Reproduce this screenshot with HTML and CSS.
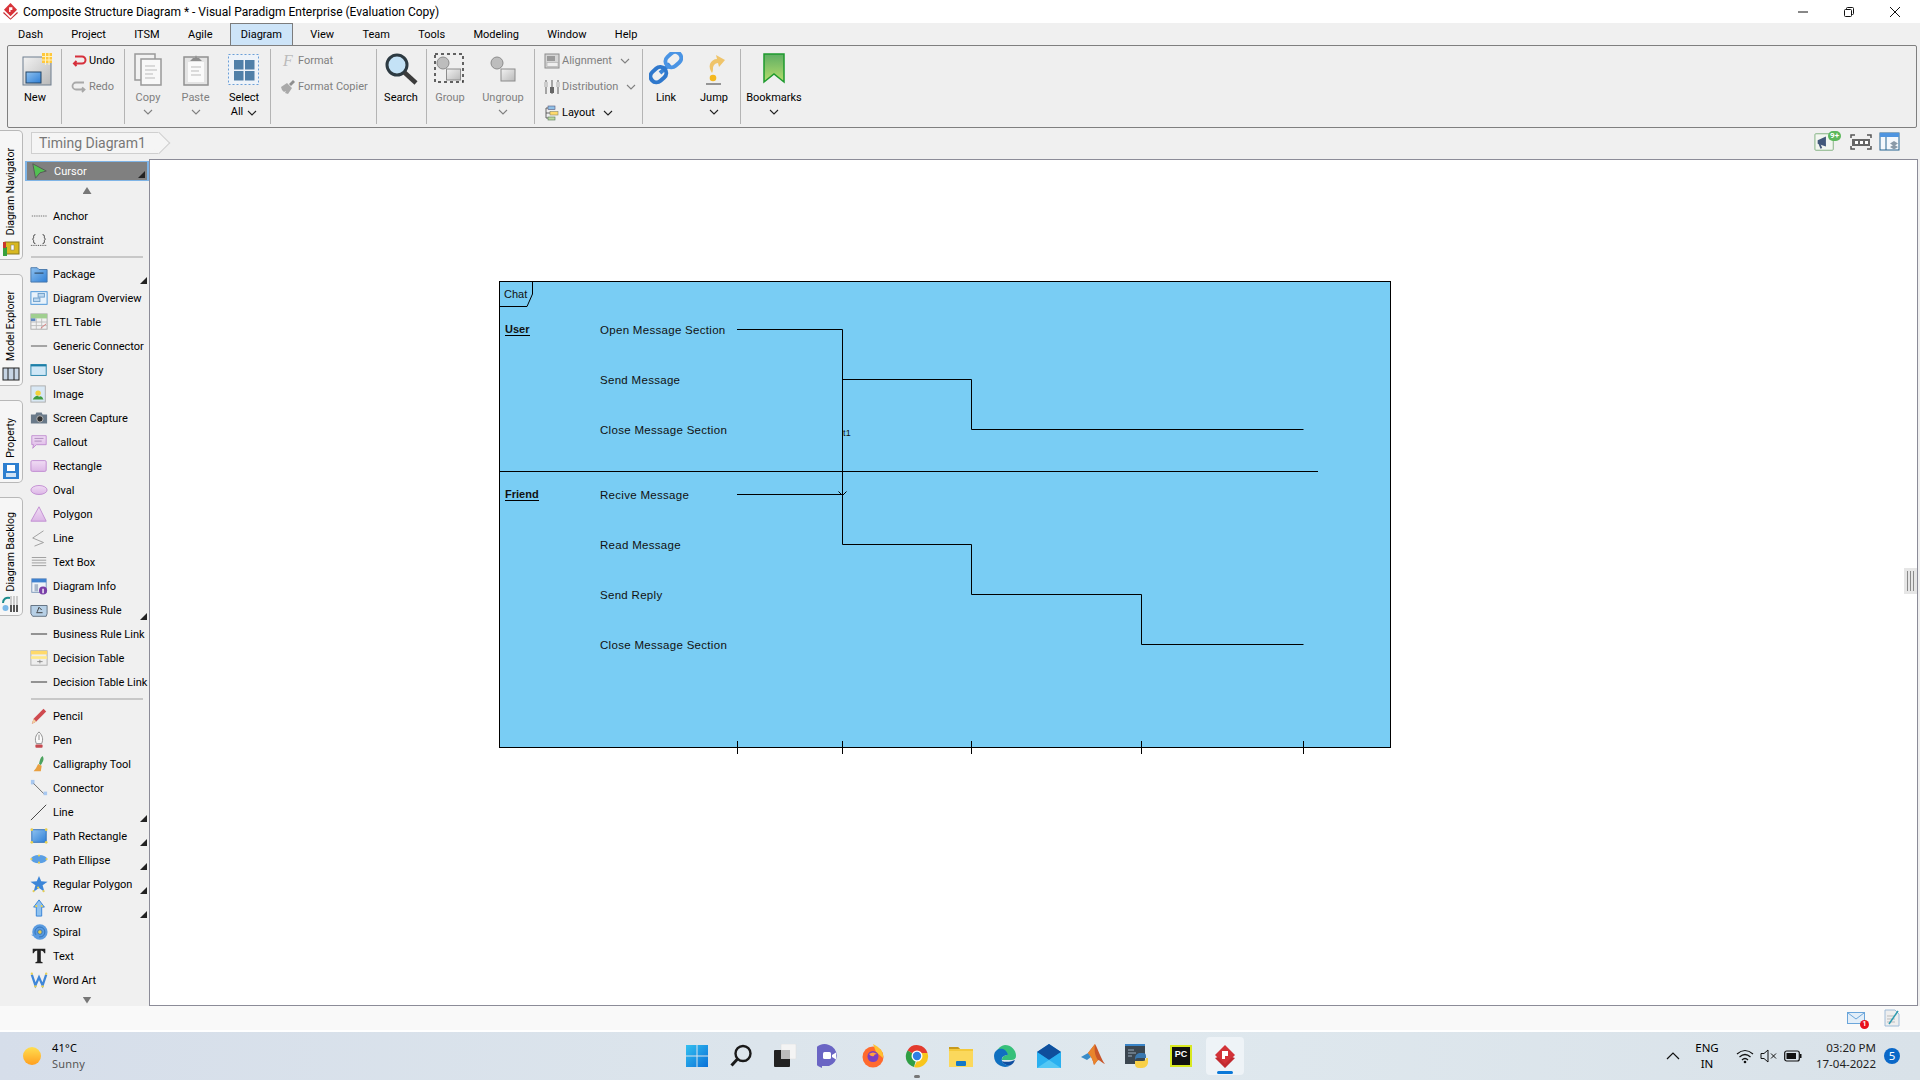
FILE: index.html
```html
<!DOCTYPE html>
<html lang="en">
<head>
<meta charset="utf-8">
<title>Composite Structure Diagram</title>
<link rel="stylesheet" href="styles.css">
</head>
<body>
<svg class="sprite" width="0" height="0">
  <defs>
    <linearGradient id="gBlue" x1="0" y1="0" x2="1" y2="1"><stop offset="0" stop-color="#8fc2f0"/><stop offset="1" stop-color="#2f7fd6"/></linearGradient>
    <linearGradient id="gGray" x1="0" y1="0" x2="1" y2="1"><stop offset="0" stop-color="#f2f2f2"/><stop offset="1" stop-color="#b9b9b9"/></linearGradient>
    <linearGradient id="gGreen" x1="0" y1="0" x2="0" y2="1"><stop offset="0" stop-color="#5fae64"/><stop offset="1" stop-color="#b6dd6c"/></linearGradient>
    <linearGradient id="gWin" x1="0" y1="0" x2="1" y2="1"><stop offset="0" stop-color="#33c0f0"/><stop offset="1" stop-color="#0a70d8"/></linearGradient>
    <linearGradient id="gViolet" x1="0" y1="0" x2="0" y2="1"><stop offset="0" stop-color="#f0dcf4"/><stop offset="1" stop-color="#dcb6e6"/></linearGradient>
  </defs>
  <symbol id="chev" viewBox="0 0 10 6"><path d="M1 1l4 4 4-4" fill="none" stroke="currentColor" stroke-width="1.1"/></symbol>
  <symbol id="vp" viewBox="0 0 16 18"><path d="M8 0l7 7-7 7-7-7z" fill="#d8343a"/><path d="M1 9.500l7 7 7-7 1 1.200-8 7-8-7z" fill="#c92e35"/><path d="M6.500 4.500h3.500v3h-2v2h-1.500z" fill="#fff"/></symbol>
  <symbol id="undo" viewBox="0 0 16 16"><path d="M4 3.500h7a3.500 3.500 0 0 1 0 7H3M5.500 8L3 10.500 5.500 13" fill="none" stroke="#d6303c" stroke-width="2"/></symbol>
  <symbol id="redo" viewBox="0 0 16 16"><path d="M13 3.500H5a3.500 3.500 0 0 0 0 7h8M11 8.500l2.500 2-2.500 2.500" fill="none" stroke="#a8a8a8" stroke-width="1.800"/></symbol>
  <symbol id="brush" viewBox="0 0 16 16"><path d="M1 8l6-4 5 5-4 6-3-1 1-2-2 1-2-2z" fill="#a9a9a9"/><path d="M9 5l4-4 2 2-4 4z" fill="#8e8e8e"/></symbol>
  <symbol id="align" viewBox="0 0 16 16"><rect x="1" y="1" width="14" height="14" fill="#d5d5d5" stroke="#8c8c8c"/><rect x="3" y="3" width="8" height="5" fill="#9a9a9a"/><rect x="3" y="9.500" width="11" height="4" fill="#eee" stroke="#aaa" stroke-width=".6"/></symbol>
  <symbol id="dist" viewBox="0 0 16 16"><path d="M2 1v14M8 1v14M14 1v14" stroke="#8c8c8c" stroke-width="1.500"/><rect x="0" y="3" width="4" height="5" fill="#ccc"/><rect x="6" y="8" width="4" height="6" fill="#666"/><rect x="12" y="3" width="4" height="5" fill="#ccc"/></symbol>
  <symbol id="layout" viewBox="0 0 16 16"><rect x="4" y="1" width="7" height="3.500" fill="#8fc0e8" stroke="#557"  stroke-width=".6"/><rect x="6" y="6.500" width="8" height="3.500" fill="#ffd96a" stroke="#886" stroke-width=".6"/><rect x="4" y="12" width="7" height="3" fill="#bcd8a0" stroke="#575" stroke-width=".6"/><path d="M2 3v10M2 3h2M2 8h4M2 13h2" stroke="#444" fill="none" stroke-width=".8"/></symbol>
  <symbol id="new" viewBox="0 0 34 34"><rect x="5" y="5" width="28" height="28" fill="url(#gGray)" stroke="#6f7f8f"/><rect x="8" y="20" width="15" height="11" fill="url(#gBlue)" stroke="#246"/><rect x="24" y="1" width="10" height="10" fill="#ffc83c"/><path d="M27.500 1v12M31 1v12M24 4.500h12M24 8h12" stroke="#fff3c0" stroke-width="1"/></symbol>
  <symbol id="copy" viewBox="0 0 34 34"><rect x="4" y="2" width="20" height="26" fill="#f2f2f2" stroke="#999" stroke-width="1.500"/><rect x="10" y="7" width="20" height="26" fill="#f8f8f8" stroke="#999" stroke-width="1.500"/><path d="M14 14h10M14 18h12M14 22h8M14 26h10" stroke="#bbb"/></symbol>
  <symbol id="paste" viewBox="0 0 34 34"><rect x="5" y="5" width="24" height="28" fill="#e4e4e4" stroke="#909090" stroke-width="1.500"/><rect x="9" y="10" width="16" height="20" fill="#fafafa"/><path d="M11 9l3-3h2l1-3 1 3h2l3 3z" fill="#8e8e8e"/><path d="M12 15h10M12 19h8M12 23h10" stroke="#bbb"/></symbol>
  <symbol id="selall" viewBox="0 0 34 34"><rect x="1.500" y="2.500" width="30" height="30" fill="#eef3f9" stroke="#6b9fd8" stroke-dasharray="2 2"/><rect x="7" y="8" width="9.500" height="9.500" fill="#4f7fa8"/><rect x="18" y="8" width="9.500" height="9.500" fill="#4f7fa8"/><rect x="7" y="19" width="9.500" height="9.500" fill="#4f7fa8"/><rect x="18" y="19" width="9.500" height="9.500" fill="#4f7fa8"/></symbol>
  <symbol id="search" viewBox="0 0 34 34"><circle cx="13" cy="13" r="10" fill="#c4e2f6" stroke="#2d3a42" stroke-width="3"/><path d="M20.500 20.500L32 31" stroke="#3c3c3c" stroke-width="4.500"/></symbol>
  <symbol id="group" viewBox="0 0 34 34"><rect x="2" y="2" width="28" height="28" fill="none" stroke="#333" stroke-width="1.500" stroke-dasharray="3 3"/><circle cx="10" cy="11" r="6" fill="#bdbdbd" stroke="#8c8c8c"/><rect x="13.500" y="17" width="14" height="11" fill="url(#gGray)" stroke="#8c8c8c"/></symbol>
  <symbol id="ungroup" viewBox="0 0 34 34"><circle cx="11" cy="11" r="6" fill="#bdbdbd" stroke="#8c8c8c"/><rect x="15" y="17" width="14" height="12" fill="url(#gGray)" stroke="#8c8c8c"/></symbol>
  <symbol id="link" viewBox="0 0 34 34"><path d="M11 21l10-9" stroke="#3a85d8" stroke-width="4"/><rect x="16" y="2" width="17" height="12" rx="6" transform="rotate(-42 24 8)" fill="none" stroke="#4a94e4" stroke-width="4"/><rect x="1" y="17" width="17" height="12" rx="6" transform="rotate(-42 9 23)" fill="none" stroke="#2f78cc" stroke-width="4"/></symbol>
  <symbol id="jump" viewBox="0 0 34 34"><path d="M15 21c-2-3-3-6-2-9 1-3 4-5 7-5l-1-4 9 5-6 7-1-4c-3 0-5 3-5 5 0 2 0 3-1 5z" fill="#efc46a"/><circle cx="16" cy="26" r="3.300" fill="#f4b820"/><path d="M9 32h15" stroke="#777" stroke-width="1.500"/></symbol>
  <symbol id="bookmark" viewBox="0 0 34 34"><path d="M7 2h20v28l-10-8-10 8z" fill="url(#gGreen)" stroke="#1e9a2e" stroke-width="1.500"/></symbol>
  <symbol id="cursor" viewBox="0 0 20 20"><path d="M2 2l15 8-7 2-5 6z" fill="#52c152" stroke="#555"/></symbol>
  <symbol id="anchor" viewBox="0 0 20 20"><path d="M2 10h17" stroke="#666" stroke-dasharray="1.500 1"/></symbol>
  <symbol id="constraint" viewBox="0 0 20 20"><path d="M6 4q-2 0-2 2v1.500L3 9l1 1.500V12q0 2 2 2M14 4q2 0 2 2v1.500L17 9l-1 1.500V12q0 2-2 2" fill="none" stroke="#333"/><path d="M1 16h18" stroke="#333" stroke-dasharray="1 1"/></symbol>
  <symbol id="package" viewBox="0 0 20 20"><path d="M1 3h7l2 2h9v14H1z" fill="url(#gBlue)" stroke="#4675a8"/><path d="M5 9h10" stroke="#234"/></symbol>
  <symbol id="overview" viewBox="0 0 20 20"><rect x="1" y="3" width="18" height="14" fill="#e8f2fb" stroke="#3f8fd8"/><rect x="9" y="5" width="7" height="4" fill="#bcd8f0" stroke="#6a9cc8"/><rect x="4" y="10" width="7" height="4" fill="#bcd8f0" stroke="#6a9cc8"/></symbol>
  <symbol id="etl" viewBox="0 0 20 20"><rect x="1" y="1" width="18" height="17" fill="#f2f2f2" stroke="#aaa"/><rect x="1" y="1" width="18" height="5" fill="#a0cf90"/><path d="M1 10h18M1 14h18M7 6v12M13 6v12" stroke="#bbb"/><rect x="1" y="6" width="5" height="3" fill="#5b85c0"/><path d="M12 17l6-5" stroke="#d87070"/></symbol>
  <symbol id="gline" viewBox="0 0 20 20"><path d="M1 10h18" stroke="#808080" stroke-width="1.500"/></symbol>
  <symbol id="dline" viewBox="0 0 20 20"><path d="M1 10h18" stroke="#444" stroke-width="1.200"/></symbol>
  <symbol id="story" viewBox="0 0 20 20"><rect x="1" y="4" width="17" height="12" fill="#cfe7f6" stroke="#1d7fa8"/><rect x="1" y="4" width="17" height="2" fill="#1d7fa8"/></symbol>
  <symbol id="image" viewBox="0 0 20 20"><rect x="1" y="1" width="16" height="18" fill="#d9e8f4" stroke="#aaa"/><circle cx="9" cy="9" r="3" fill="#f4d23c"/><path d="M3 16q4-6 7-3 3-2 5 3z" fill="#3f9c3f"/></symbol>
  <symbol id="camera" viewBox="0 0 20 20"><path d="M1 6h5l1-2h6l1 2h5v10H1z" fill="#6a7a8a"/><circle cx="11" cy="11" r="3.500" fill="#333" stroke="#bbb"/></symbol>
  <symbol id="callout" viewBox="0 0 20 20"><path d="M2 3h16v10H7l-4 4 1-4H2z" fill="url(#gViolet)" stroke="#c08ad0"/><path d="M5 6h10M5 9h8" stroke="#a888b8"/></symbol>
  <symbol id="rect" viewBox="0 0 20 20"><rect x="1" y="4" width="17" height="12" rx="1.500" fill="url(#gViolet)" stroke="#c08ad0"/></symbol>
  <symbol id="oval" viewBox="0 0 20 20"><ellipse cx="10" cy="10" rx="9" ry="5" fill="url(#gViolet)" stroke="#c08ad0"/></symbol>
  <symbol id="poly" viewBox="0 0 20 20"><path d="M10 2l8 16H1z" fill="url(#gViolet)" stroke="#c08ad0"/></symbol>
  <symbol id="zline" viewBox="0 0 20 20"><path d="M15 2L3 10l12 5-10 4" fill="none" stroke="#999"/></symbol>
  <symbol id="textbox" viewBox="0 0 20 20"><path d="M2 5h16M2 8h16M2 11h16M2 14h16" stroke="#999"/></symbol>
  <symbol id="dinfo" viewBox="0 0 20 20"><rect x="2" y="2" width="16" height="15" fill="#eef3f8" stroke="#7a95b8"/><rect x="2" y="2" width="16" height="4" fill="#3f82d0"/><rect x="5" y="8" width="4" height="8" fill="#a8b8cc"/><circle cx="14.500" cy="15" r="4.500" fill="#7a3fa8"/><path d="M14.500 13v5" stroke="#fff" stroke-width="1.500"/></symbol>
  <symbol id="brule" viewBox="0 0 20 20"><path d="M1 5h18v9l-1 3H3l-2-3z" fill="#b7d0e6" stroke="#5a6a7a"/><path d="M7 13h7M8 12l2-5 3 3" stroke="#333" fill="none"/></symbol>
  <symbol id="dtable" viewBox="0 0 20 20"><rect x="1" y="2" width="18" height="16" fill="#eee" stroke="#aaa"/><rect x="1" y="2" width="18" height="4" fill="#ffd96a"/><rect x="1" y="8" width="18" height="3" fill="#ffe88a"/><path d="M8 14h6M11 12v4" stroke="#888"/></symbol>
  <symbol id="pencil" viewBox="0 0 20 20"><path d="M2 19l2-6L15 2l3 3L7 16z" fill="#cf4a4f"/><path d="M2 19l2-6 3 3z" fill="#f0d0a0"/></symbol>
  <symbol id="pen" viewBox="0 0 20 20"><path d="M10 1c4 4 5 8 3 13H7C5 9 6 5 10 1z" fill="#fafafa" stroke="#888"/><path d="M10 4v6" stroke="#888"/><rect x="6" y="15" width="8" height="3.500" rx="1" fill="#c64a50"/></symbol>
  <symbol id="calli" viewBox="0 0 20 20"><path d="M14 1c2 3 1 6-2 10l-2-1c1-4 1-7 4-9z" fill="#4da35f"/><path d="M9 10l4 2-1 6H4q3-3 5-8z" fill="#e9a040"/></symbol>
  <symbol id="connector" viewBox="0 0 20 20"><rect x="1" y="1" width="4" height="5" fill="#a8c8f0"/><rect x="15" y="14" width="4" height="4" fill="#a8c8f0"/><path d="M4 5l11 11" stroke="#666"/></symbol>
  <symbol id="line2" viewBox="0 0 20 20"><path d="M1 19L18 2" stroke="#333"/></symbol>
  <symbol id="prect" viewBox="0 0 20 20"><rect x="2" y="3" width="16" height="14" fill="url(#gBlue)" stroke="#2f6fb8"/><g fill="#e8cf50"><circle cx="2" cy="3" r="1.500"/><circle cx="18" cy="3" r="1.500"/><circle cx="2" cy="17" r="1.500"/><circle cx="18" cy="17" r="1.500"/></g></symbol>
  <symbol id="pell" viewBox="0 0 20 20"><ellipse cx="10" cy="9" rx="9" ry="4.500" fill="#5a9fe4"/><g fill="#e8cf50"><circle cx="10" cy="5" r="1.200"/><circle cx="10" cy="13" r="1.200"/><circle cx="1.500" cy="9" r="1.200"/><circle cx="18.500" cy="9" r="1.200"/></g></symbol>
  <symbol id="rpoly" viewBox="0 0 20 20"><path d="M10 1l2.500 6 7 .5-5.500 4 2 7-6-4-6 4 2-7L.5 7.500l7-.5z" fill="#3c86d8"/><g fill="#e8cf50"><circle cx="4" cy="18" r="1.200"/><circle cx="9" cy="14" r="1.200"/><circle cx="15" cy="18" r="1.200"/></g></symbol>
  <symbol id="arrow" viewBox="0 0 20 20"><path d="M10 1l6 8h-3v10H7V9H4z" fill="#8fc2f0" stroke="#2f7fd6"/><circle cx="7" cy="8" r="1.200" fill="#e8cf50"/><circle cx="13" cy="8" r="1.200" fill="#e8cf50"/></symbol>
  <symbol id="spiral" viewBox="0 0 20 20"><circle cx="11" cy="10" r="8.500" fill="#5a9be0"/><circle cx="11" cy="10" r="5.500" fill="none" stroke="#2f6fb8"/><circle cx="11" cy="10" r="2.500" fill="#e8cf50" stroke="#2f6fb8"/><path d="M1 13h9v5z" fill="#5a9be0"/></symbol>
  <symbol id="bigt" viewBox="0 0 20 20"><path d="M3 2h14v5h-1q-1-3-4-3v12l2 1v1H6v-1l2-1V4q-3 0-4 3H3z" fill="#222"/></symbol>
  <symbol id="wordart" viewBox="0 0 20 20"><path d="M2 4l4 12 4-9 4 9 4-12" fill="none" stroke="#3f86d8" stroke-width="2.500"/><g fill="#e8cf50"><circle cx="2" cy="3" r="1.300"/><circle cx="18" cy="3" r="1.300"/><circle cx="6" cy="17" r="1.300"/><circle cx="14" cy="17" r="1.300"/></g></symbol>
  <symbol id="navtab" viewBox="0 0 18 18"><rect x="3" y="3" width="14" height="12" fill="#d8b820" stroke="#8a7a20"/><rect x="9" y="6" width="3" height="5" fill="#fff" stroke="#777" stroke-width=".5"/><rect x="1" y="8" width="4" height="9" fill="#38a03c"/><rect x="1" y="3" width="3" height="6" fill="#c8362c"/></symbol>
  <symbol id="modeltab" viewBox="0 0 18 18"><rect x="1" y="3" width="16" height="12" fill="#c6d4e4" stroke="#222"/><path d="M6 3v12M12 3v12" stroke="#222"/></symbol>
  <symbol id="proptab" viewBox="0 0 18 18"><rect x="1" y="1" width="16" height="16" fill="#2d7fd0"/><rect x="5" y="3" width="8" height="6" fill="#fff"/><path d="M4 11h10v4H4z" fill="#cfe2f5"/></symbol>
  <symbol id="backtab" viewBox="0 0 18 18"><path d="M1 8c0-4 3-6 7-5" fill="none" stroke="#1c8c8c" stroke-width="2"/><circle cx="3.500" cy="13" r="3" fill="#7ab8e8"/><path d="M9 1v16M12 1v16M15 1v16" stroke="#ccc" stroke-width="2"/><path d="M9 10v7M12 10v7M15 10v7" stroke="#555" stroke-width="2"/></symbol>
  <symbol id="shout" viewBox="0 0 24 20"><rect x="1" y="1" width="20" height="18" rx="1" fill="#f2f6f0" stroke="#7cae7c"/><path d="M4 8l9-4v11l-9-3z" fill="#42587a"/><path d="M6 12l2 5" stroke="#42587a" stroke-width="2"/></symbol>
  <symbol id="film" viewBox="0 0 22 18"><path d="M1 5V2h4M17 2h4v3M1 13v3h4M17 16h4v-3" fill="none" stroke="#555" stroke-width="1.500"/><rect x="2" y="6" width="18" height="7" fill="#666"/><path d="M5 8h3v3H5zM10 8h3v3h-3zM15 8h3v3h-3z" fill="#fff"/></symbol>
  <symbol id="panel" viewBox="0 0 22 20"><rect x="1" y="1" width="19" height="17" fill="#f4f8fc" stroke="#24628f"/><rect x="1" y="1" width="19" height="4" fill="#4f95e0"/><path d="M7 5v13" stroke="#24628f"/><path d="M15 9l4 2.500-4 2.500-4-2.500zM15 12.500l4 2.500-4 2.500-4-2.500z" fill="#8a9aa8"/></symbol>
  <symbol id="mail" viewBox="0 0 18 12"><rect x=".500" y=".500" width="17" height="11" fill="#e3eef8" stroke="#6aa5da"/><path d="M1 1l8 6 8-6" fill="none" stroke="#6aa5da"/></symbol>
  <symbol id="note" viewBox="0 0 16 18"><path d="M1 1h10l4 4v12H1z" fill="#eee" stroke="#a0bcd8"/><path d="M3 7h7M3 10h8M3 13h8" stroke="#bbb"/><path d="M5 15L14 2" stroke="#2c9ab0" stroke-width="1.500"/></symbol>
  <symbol id="t-win" viewBox="0 0 24 24"><path d="M1 1h10.500v10.500H1zM12.500 1H23v10.500H12.500zM1 12.500h10.500V23H1zM12.500 12.500H23V23H12.500z" fill="url(#gWin)"/></symbol>
  <symbol id="t-search" viewBox="0 0 24 24"><circle cx="14" cy="9.500" r="7.500" fill="none" stroke="#1a1a1a" stroke-width="2.400"/><path d="M8.500 15L2.500 21.500" stroke="#1a1a1a" stroke-width="3"/></symbol>
  <symbol id="t-task" viewBox="0 0 24 24"><rect x="8" y="0" width="15" height="15" rx="1" fill="#f4f4f4" stroke="#ddd" stroke-width=".5"/><rect x="1" y="6" width="16" height="17" rx="1" fill="#222"/><rect x="8" y="6" width="9" height="9" fill="#bbb"/></symbol>
  <symbol id="t-chat" viewBox="0 0 24 24"><path d="M12 1a11 11 0 0 1 0 21H5v2l-2-1a11 11 0 0 1 9-22z" fill="#6a65c4"/><rect x="6" y="8" width="8" height="7" rx="1.500" fill="#fff"/><path d="M15 11l4-2.500v7L15 13z" fill="#fff"/></symbol>
  <symbol id="t-ff" viewBox="0 0 24 24"><circle cx="12" cy="13" r="10.500" fill="#ff6a2e"/><path d="M12 0c6 3 11 7 10 14L15 8z" fill="#ffc030"/><circle cx="12" cy="12.500" r="5.500" fill="#7a3fc0"/><path d="M8 10q4-3 8 0-3 0-3 2-3 1-5-2z" fill="#ffa040"/></symbol>
  <symbol id="t-chrome" viewBox="0 0 24 24"><path d="M12 12L2.500 6.500A11 11 0 0 1 22.500 9H12z" fill="#e33b2e"/><path d="M12 12l-9.500-5.500A11 11 0 0 0 9 23z" fill="#2f9e44"/><path d="M12 9h10.500A11 11 0 0 1 9 23l5-10z" fill="#f8c51c"/><circle cx="12" cy="12" r="5.500" fill="#fff"/><circle cx="12" cy="12" r="4.200" fill="#2f7fe6"/></symbol>
  <symbol id="t-folder" viewBox="0 0 24 24"><path d="M0 3h9l2 2h13v18H0z" fill="#f4c93a"/><path d="M0 3h9l2 2H0z" fill="#c89a1c"/><rect x="0" y="7" width="24" height="16" fill="#fbd85c"/><rect x="7" y="17" width="10" height="5" rx="1" fill="#1478c8"/></symbol>
  <symbol id="t-edge" viewBox="0 0 24 24"><path d="M12 1a11 11 0 0 1 11 11q0 4-5 4H9c0-4 3-5 6-5-1-3-9-4-12 3A11 11 0 0 1 12 1z" fill="#36c07a"/><path d="M1 12q0-4 3-6c3-2 9-2 11 5-4 0-7 2-6 6 1 3 5 5 9 4a11 11 0 0 1-17-9z" fill="#1070c0"/><path d="M9 17c1 3 5 5 9 4 2-1 3-3 4-5-2 1-9 3-13 1z" fill="#0f4fa0"/></symbol>
  <symbol id="t-mail" viewBox="0 0 24 24"><path d="M0 8l12-8 12 8v16H0z" fill="#1a86d8"/><path d="M0 8l12 8 12-8-12-8z" fill="#0f4f9c"/><path d="M0 8l12 8 12-8v16H0z" fill="#2ab0f0"/><path d="M0 24l12-8 12 8z" fill="#54c8f5"/></symbol>
  <symbol id="t-matlab" viewBox="0 0 24 24"><path d="M0 13l7-4 3 4-4 3z" fill="#3a8cc8"/><path d="M7 9l7-9c3 5 6 15 10 20-3-1-5-4-7-4-2 2-3 4-4 5-1-4-2-8-6-12z" fill="#c8562a"/><path d="M14 0c-1 7 0 12 3 16-2 2-3 4-4 5-1-4-2-8-6-12z" fill="#e8842c"/></symbol>
  <symbol id="t-py" viewBox="0 0 24 24"><rect x="0" y="0" width="20" height="20" fill="#3b4650"/><rect x="0" y="0" width="20" height="2" fill="#3a85c8"/><path d="M3 6h6M3 9h8M3 12h4" stroke="#9ab" /><path d="M14 9h4a3 3 0 0 1 3 3v2h-8a3 3 0 0 0-3 3v-2a6 6 0 0 1 4-6z" fill="#3a78b0"/><path d="M10 17h8a3 3 0 0 0 3-3h2v3a6 6 0 0 1-6 7h-3a4 4 0 0 1-4-4z" fill="#f8d048"/></symbol>
  <symbol id="t-vp" viewBox="0 0 24 24"><path d="M12 1l10 10-10 10L2 11z" fill="#d23238"/><path d="M2 14l10 10 10-10-3-1-7 7-7-7z" fill="#c22a30"/><path d="M9 7h6v5h-3v3H9z" fill="#fff"/></symbol>
  <symbol id="wifi" viewBox="0 0 18 16"><path d="M1 6q8-7 16 0M3.500 9q5.500-5 11 0M6 12q3-3 6 0" fill="none" stroke="#111" stroke-width="1.200"/><circle cx="9" cy="14" r="1.300" fill="#111"/></symbol>
  <symbol id="sound" viewBox="0 0 18 16"><path d="M1 5.500h3l4-3.500v12l-4-3.500H1z" fill="none" stroke="#111"/><path d="M11 5.500l5 5M16 5.500l-5 5" stroke="#111"/></symbol>
  <symbol id="battery" viewBox="0 0 18 12"><rect x=".700" y="1" width="14.600" height="10" rx="2" fill="none" stroke="#111" stroke-width="1.200"/><rect x="2.500" y="3" width="9.500" height="6" fill="#111"/><rect x="16" y="4" width="1.500" height="4" fill="#111"/></symbol>
  <symbol id="caret" viewBox="0 0 14 8"><path d="M1 7l6-6 6 6" fill="none" stroke="#111" stroke-width="1.200"/></symbol>
  <symbol id="min" viewBox="0 0 10 10"><path d="M0 5h10" stroke="#111"/></symbol>
  <symbol id="max" viewBox="0 0 10 10"><rect x=".500" y="2.500" width="7" height="7" rx="1" fill="#fff" stroke="#111"/><path d="M2.500 2.500v-1q0-1 1-1h5q1 0 1 1v5q0 1-1 1h-1" fill="none" stroke="#111"/></symbol>
  <symbol id="close" viewBox="0 0 10 10"><path d="M0 0l10 10M10 0L0 10" stroke="#111"/></symbol>
</svg>

<header class="titlebar">
  <svg class="title-logo"><use href="#vp"/></svg>
  <span class="title-text">Composite Structure Diagram * - Visual Paradigm Enterprise (Evaluation Copy)</span>
  <div class="win-controls">
    <svg class="win-btn"><use href="#min"/></svg>
    <svg class="win-btn"><use href="#max"/></svg>
    <svg class="win-btn"><use href="#close"/></svg>
  </div>
</header>

<nav class="menubar">
  <span class="menu-item">Dash</span>
  <span class="menu-item">Project</span>
  <span class="menu-item">ITSM</span>
  <span class="menu-item">Agile</span>
  <span class="menu-item menu-active">Diagram</span>
  <span class="menu-item">View</span>
  <span class="menu-item">Team</span>
  <span class="menu-item">Tools</span>
  <span class="menu-item">Modeling</span>
  <span class="menu-item">Window</span>
  <span class="menu-item">Help</span>
</nav>

<section class="ribbon">
  <div class="group g-new">
    <div class="big w54"><svg class="big-ico"><use href="#new"/></svg><span class="big-label">New</span></div>
  </div>
  <div class="group g-undo stack">
    <div class="small"><svg class="small-ico"><use href="#undo"/></svg><span>Undo</span></div>
    <div class="small off"><svg class="small-ico"><use href="#redo"/></svg><span>Redo</span></div>
  </div>
  <div class="group g-edit">
    <div class="big w46 off"><svg class="big-ico"><use href="#copy"/></svg><span class="big-label">Copy</span><svg class="chev"><use href="#chev"/></svg></div>
    <div class="big w49 off"><svg class="big-ico"><use href="#paste"/></svg><span class="big-label">Paste</span><svg class="chev"><use href="#chev"/></svg></div>
    <div class="big w48"><svg class="big-ico"><use href="#selall"/></svg><span class="big-label">Select</span><span class="all-line">All <svg class="chev inline"><use href="#chev"/></svg></span></div>
  </div>
  <div class="group g-format stack">
    <div class="small off"><span class="small-ico f-glyph">F</span><span>Format</span></div>
    <div class="small off"><svg class="small-ico"><use href="#brush"/></svg><span>Format Copier</span></div>
  </div>
  <div class="group g-search">
    <div class="big w48"><svg class="big-ico"><use href="#search"/></svg><span class="big-label">Search</span></div>
  </div>
  <div class="group g-group">
    <div class="big w46 off"><svg class="big-ico"><use href="#group"/></svg><span class="big-label">Group</span></div>
    <div class="big w60 off"><svg class="big-ico"><use href="#ungroup"/></svg><span class="big-label">Ungroup</span><svg class="chev"><use href="#chev"/></svg></div>
  </div>
  <div class="group g-arrange stack">
    <div class="small off"><svg class="small-ico"><use href="#align"/></svg><span>Alignment</span><svg class="chev side"><use href="#chev"/></svg></div>
    <div class="small off"><svg class="small-ico"><use href="#dist"/></svg><span>Distribution</span><svg class="chev side"><use href="#chev"/></svg></div>
    <div class="small"><svg class="small-ico"><use href="#layout"/></svg><span>Layout</span><svg class="chev side"><use href="#chev"/></svg></div>
  </div>
  <div class="group g-link">
    <div class="big w46"><svg class="big-ico"><use href="#link"/></svg><span class="big-label">Link</span></div>
    <div class="big w50"><svg class="big-ico"><use href="#jump"/></svg><span class="big-label">Jump</span><svg class="chev"><use href="#chev"/></svg></div>
  </div>
  <div class="group g-book">
    <div class="big w66"><svg class="big-ico"><use href="#bookmark"/></svg><span class="big-label">Bookmarks</span><svg class="chev"><use href="#chev"/></svg></div>
  </div>
</section>

<main class="main">
  <aside class="side-tabs">
    <div class="side-tab t1"><span class="side-label">Diagram Navigator</span><svg class="side-ico"><use href="#navtab"/></svg></div>
    <div class="side-tab t2"><span class="side-label">Model Explorer</span><svg class="side-ico"><use href="#modeltab"/></svg></div>
    <div class="side-tab t3"><span class="side-label">Property</span><svg class="side-ico"><use href="#proptab"/></svg></div>
    <div class="side-tab t4"><span class="side-label">Diagram Backlog</span><svg class="side-ico"><use href="#backtab"/></svg></div>
  </aside>
  <div class="content">
    <div class="crumb-row">
      <div class="crumb"><span class="crumb-text">Timing Diagram1</span></div>
      <div class="crumb-tools">
        <span class="shout-wrap"><svg class="tool-ico"><use href="#shout"/></svg><span class="shout-badge">9+</span></span>
        <svg class="tool-ico"><use href="#film"/></svg>
        <svg class="tool-ico"><use href="#panel"/></svg>
      </div>
    </div>
    <div class="work">
      <div class="palette">
        <div class="row cursor-row more"><svg class="pal-ico"><use href="#cursor"/></svg><span>Cursor</span></div>
        <div class="scroll-arrow"><span class="tri-up"></span></div>
        <div class="row anchor-row"><svg class="pal-ico"><use href="#anchor"/></svg><span>Anchor</span></div>
        <div class="row"><svg class="pal-ico"><use href="#constraint"/></svg><span>Constraint</span></div>
        <div class="sep"></div>
        <div class="row more"><svg class="pal-ico"><use href="#package"/></svg><span>Package</span></div>
        <div class="row"><svg class="pal-ico"><use href="#overview"/></svg><span>Diagram Overview</span></div>
        <div class="row"><svg class="pal-ico"><use href="#etl"/></svg><span>ETL Table</span></div>
        <div class="row"><svg class="pal-ico"><use href="#gline"/></svg><span>Generic Connector</span></div>
        <div class="row"><svg class="pal-ico"><use href="#story"/></svg><span>User Story</span></div>
        <div class="row"><svg class="pal-ico"><use href="#image"/></svg><span>Image</span></div>
        <div class="row"><svg class="pal-ico"><use href="#camera"/></svg><span>Screen Capture</span></div>
        <div class="row"><svg class="pal-ico"><use href="#callout"/></svg><span>Callout</span></div>
        <div class="row"><svg class="pal-ico"><use href="#rect"/></svg><span>Rectangle</span></div>
        <div class="row"><svg class="pal-ico"><use href="#oval"/></svg><span>Oval</span></div>
        <div class="row"><svg class="pal-ico"><use href="#poly"/></svg><span>Polygon</span></div>
        <div class="row"><svg class="pal-ico"><use href="#zline"/></svg><span>Line</span></div>
        <div class="row"><svg class="pal-ico"><use href="#textbox"/></svg><span>Text Box</span></div>
        <div class="row"><svg class="pal-ico"><use href="#dinfo"/></svg><span>Diagram Info</span></div>
        <div class="row more"><svg class="pal-ico"><use href="#brule"/></svg><span>Business Rule</span></div>
        <div class="row"><svg class="pal-ico"><use href="#dline"/></svg><span>Business Rule Link</span></div>
        <div class="row"><svg class="pal-ico"><use href="#dtable"/></svg><span>Decision Table</span></div>
        <div class="row"><svg class="pal-ico"><use href="#dline"/></svg><span>Decision Table Link</span></div>
        <div class="sep"></div>
        <div class="row"><svg class="pal-ico"><use href="#pencil"/></svg><span>Pencil</span></div>
        <div class="row"><svg class="pal-ico"><use href="#pen"/></svg><span>Pen</span></div>
        <div class="row"><svg class="pal-ico"><use href="#calli"/></svg><span>Calligraphy Tool</span></div>
        <div class="row"><svg class="pal-ico"><use href="#connector"/></svg><span>Connector</span></div>
        <div class="row more"><svg class="pal-ico"><use href="#line2"/></svg><span>Line</span></div>
        <div class="row more"><svg class="pal-ico"><use href="#prect"/></svg><span>Path Rectangle</span></div>
        <div class="row more"><svg class="pal-ico"><use href="#pell"/></svg><span>Path Ellipse</span></div>
        <div class="row more"><svg class="pal-ico"><use href="#rpoly"/></svg><span>Regular Polygon</span></div>
        <div class="row more"><svg class="pal-ico"><use href="#arrow"/></svg><span>Arrow</span></div>
        <div class="row"><svg class="pal-ico"><use href="#spiral"/></svg><span>Spiral</span></div>
        <div class="row"><svg class="pal-ico"><use href="#bigt"/></svg><span>Text</span></div>
        <div class="row"><svg class="pal-ico"><use href="#wordart"/></svg><span>Word Art</span></div>
        <div class="scroll-arrow down"><span class="tri-down"></span></div>
      </div>
      <div class="canvas">
        <svg class="diagram" viewBox="150 160 1768 845" width="1768" height="845" preserveAspectRatio="xMinYMin">
          <rect class="frame" x="499.500" y="281.500" width="891" height="466"/>
          <path class="ln" d="M499.500 306.500H527L532.500 294V281.500"/>
          <path class="ln" d="M499.500 471.500H1318"/>
          <path class="ln" d="M737 329.500H842.500V544.500H971.500V594.500H1141.500V644.500H1303.500"/>
          <path class="ln" d="M842.500 379.500H971.500V429.500H1303.500"/>
          <path class="ln" d="M737 494.500H842.500"/>
          <path class="ln" d="M838.500 491.500L842.500 495.500 846.500 491.500"/>
          <path class="ln" d="M737.500 741V754M842.500 741V754M971.500 741V754M1141.500 741V754M1303.500 741V754"/>
          <text class="dg chat" x="504" y="298">Chat</text>
          <text class="dg strong" x="505" y="333">User</text>
          <path class="ln" d="M505 335.500H530"/>
          <text class="dg strong" x="505" y="498">Friend</text>
          <path class="ln" d="M505 500.500H539"/>
          <text class="dg" x="600" y="334">Open Message Section</text>
          <text class="dg" x="600" y="384">Send Message</text>
          <text class="dg" x="600" y="434">Close Message Section</text>
          <text class="dg" x="600" y="499">Recive Message</text>
          <text class="dg" x="600" y="549">Read Message</text>
          <text class="dg" x="600" y="599">Send Reply</text>
          <text class="dg" x="600" y="649">Close Message Section</text>
          <text class="dg tiny" x="843" y="436">t1</text>
        </svg>
        <div class="handle"></div>
      </div>
    </div>
  </div>
</main>

<div class="statusbar">
  <span class="mail-wrap"><svg class="mail-ico"><use href="#mail"/></svg><span class="mail-dot">1</span></span>
  <svg class="note-ico"><use href="#note"/></svg>
</div>

<footer class="taskbar">
  <div class="weather">
    <span class="sun"></span>
    <div class="weather-text"><span>41°C</span><span class="dim">Sunny</span></div>
  </div>
  <div class="task-icons">
    <span class="task"><svg class="task-ico"><use href="#t-win"/></svg></span>
    <span class="task"><svg class="task-ico"><use href="#t-search"/></svg></span>
    <span class="task"><svg class="task-ico"><use href="#t-task"/></svg></span>
    <span class="task"><svg class="task-ico"><use href="#t-chat"/></svg></span>
    <span class="task"><svg class="task-ico"><use href="#t-ff"/></svg></span>
    <span class="task running"><svg class="task-ico"><use href="#t-chrome"/></svg></span>
    <span class="task"><svg class="task-ico"><use href="#t-folder"/></svg></span>
    <span class="task"><svg class="task-ico"><use href="#t-edge"/></svg></span>
    <span class="task"><svg class="task-ico"><use href="#t-mail"/></svg></span>
    <span class="task"><svg class="task-ico"><use href="#t-matlab"/></svg></span>
    <span class="task"><svg class="task-ico"><use href="#t-py"/></svg></span>
    <span class="task"><span class="pc-icon">PC</span></span>
    <span class="task active"><svg class="task-ico"><use href="#t-vp"/></svg></span>
  </div>
  <div class="tray">
    <svg class="tray-caret"><use href="#caret"/></svg>
    <div class="lang"><span>ENG</span><span>IN</span></div>
    <svg class="tray-ico"><use href="#wifi"/></svg>
    <svg class="tray-ico"><use href="#sound"/></svg>
    <svg class="tray-ico"><use href="#battery"/></svg>
    <div class="clock"><span>03:20 PM</span><span>17-04-2022</span></div>
    <span class="notif">5</span>
  </div>
</footer>
</body>
</html>
```
FILE: styles.css
```css
* { box-sizing: border-box; }
html, body { margin: 0; height: 100%; }
body {
  width: 1920px; height: 1080px; overflow: hidden;
  display: flex; flex-direction: column;
  background: #f0f0f0; color: #000;
  font: 11px/14px Roboto, sans-serif;
}
.sprite { position: absolute; }

/* title */
.titlebar { height: 23px; flex: none; background: #fff; display: flex; align-items: center; padding-left: 3px; }
.title-logo { width: 15px; height: 17px; }
.title-text { margin-left: 5px; font-size: 12px; }
.win-controls { margin-left: auto; display: flex; gap: 36px; padding-right: 20px; }
.win-btn { width: 10px; height: 10px; display: block; }

/* menu */
.menubar { height: 22px; flex: none; display: flex; gap: 6.3px; padding-left: 7px; align-items: flex-end; }
.menu-item { height: 21px; padding: 0 11px; line-height: 21px; }
.menu-active { background: #cde4f8; border: 1px solid #7c7c7c; border-bottom: 0; padding: 0 10px; height: 22px; line-height: 21px; }

/* ribbon */
.ribbon { height: 83px; flex: none; margin: 0 3px 0 7px; border: 1px solid #7f7f7f; border-radius: 2px; background: #efefef; display: flex; padding-top: 3px; }
.group { height: 75px; border-right: 1px solid #b4b4b4; display: flex; }
.g-new { width: 54px; }
.g-undo { width: 63px; }
.g-edit { width: 146px; }
.g-format { width: 106px; }
.g-search { width: 50px; }
.g-group { width: 108px; }
.g-arrange { width: 108px; }
.g-link { width: 98px; }
.g-book { border-right: 0; }
.stack { flex-direction: column; gap: 4px; padding: 1px 0 0 9px; }
.big { display: flex; flex-direction: column; align-items: center; padding-top: 3px; flex: none; }
.w46 { width: 46px; } .w48 { width: 48px; } .w49 { width: 49px; } .w50 { width: 50px; } .w54 { width: 54px; } .w60 { width: 60px; } .w66 { width: 66px; }
.big-ico { width: 34px; height: 34px; flex: none; }
.big-label { margin-top: 5px; height: 14px; white-space: nowrap; }
.all-line { display: flex; align-items: center; gap: 4px; height: 14px; }
.chev { width: 10px; height: 6px; margin-top: 4px; flex: none; color: #222; }
.chev.inline { margin-top: 1px; }
.chev.side { margin: 0 0 0 6px; }
.off { color: #808080; }
.off .chev { color: #808080; }
.small { height: 22px; display: flex; align-items: center; gap: 2px; white-space: nowrap; }
.small-ico { width: 16px; height: 16px; flex: none; }
.f-glyph { font: italic 16px/16px "Liberation Serif", serif; color: #bbb; text-align: center; }

/* main */
.main { flex: 1; min-height: 0; display: flex; }
.side-tabs { width: 25px; flex: none; display: flex; flex-direction: column; padding-top: 2px; gap: 14px; }
.side-tab { width: 23px; background: #f6f6f6; border: 1px solid #b8b8b8; border-left: 0; border-radius: 0 5px 5px 0; display: flex; flex-direction: column; align-items: center; justify-content: flex-end; gap: 4px; padding-bottom: 2px; }
.t1 { height: 130px; }
.t2 { height: 112px; }
.t3 { height: 83px; }
.t4 { height: 119px; }
.side-label { writing-mode: vertical-rl; transform: rotate(180deg); font-size: 10.5px; line-height: 14px; white-space: nowrap; }
.side-ico { width: 18px; height: 18px; flex: none; }
.content { flex: 1; min-width: 0; display: flex; flex-direction: column; }
.crumb-row { height: 31px; flex: none; display: flex; align-items: flex-start; padding: 4px 19px 0 6px; }
.crumb { position: relative; width: 128px; height: 22px; background: #f5f5f5; border: 1px solid #cfcfcf; border-right: 0; padding-left: 7px; font-size: 14px; line-height: 21px; color: #777; }
.crumb::after { content: ""; position: absolute; top: 2px; right: -8px; width: 15px; height: 15px; background: #f5f5f5; border: 1px solid #cfcfcf; border-left: 0; border-bottom: 0; transform: rotate(45deg); }
.crumb-text { position: relative; z-index: 1; white-space: nowrap; }
.crumb-tools { margin-left: auto; display: flex; gap: 7px; align-items: center; }
.tool-ico { width: 22px; height: 20px; display: block; }
.shout-wrap { position: relative; display: block; margin-right: 7px; }
.shout-badge { position: absolute; top: -1px; right: -5px; height: 10px; padding: 0 2px; border-radius: 5px; background: #5cb85c; font-size: 8px; line-height: 10px; font-weight: 700; color: #fff; }
.work { flex: 1; min-height: 0; display: flex; margin-right: 2px; }
.palette { width: 124px; flex: none; display: flex; flex-direction: column; padding-top: 2px; }
.row { position: relative; height: 24px; flex: none; display: flex; align-items: center; padding-left: 5px; gap: 5px; white-space: nowrap; }
.row span { padding-top: 1px; }
.pal-ico { width: 18px; height: 18px; flex: none; }
.more::after { content: ""; position: absolute; right: 2px; bottom: 2px; width: 7px; height: 7px; background: #222; clip-path: polygon(100% 0, 100% 100%, 0 100%); }
.cursor-row { height: 20px; background: #808080; border: 1px solid #7fb4e6; border-width: 1px 2px; color: #fff; padding-left: 4px; }
.scroll-arrow { height: 19px; flex: none; display: flex; align-items: center; justify-content: center; }
.scroll-arrow.down { height: 16px; }
.tri-up, .tri-down { width: 9px; height: 7px; background: #777; }
.tri-up { clip-path: polygon(50% 0, 100% 100%, 0 100%); }
.tri-down { clip-path: polygon(0 0, 100% 0, 50% 100%); }
.anchor-row { margin-top: 4px; }
.sep { height: 2px; margin: 4px 6px; background: #c8c8c8; flex: none; }
.canvas { position: relative; flex: 1; min-width: 0; background: #fff; border: 1px solid #8c8c98; overflow: hidden; }
.diagram { display: block; }
.frame { fill: #79cdf4; stroke: #000; stroke-width: 1; }
.ln { fill: none; stroke: #000; stroke-width: 1; }
.dg { font: 11.5px "Liberation Sans", sans-serif; fill: #111; letter-spacing: .3px; }
.chat { font-size: 11px; letter-spacing: 0; }
.strong { font-weight: 700; font-size: 11px; letter-spacing: 0; }
.tiny { font-size: 9px; }
.handle { position: absolute; right: 0; top: 408px; width: 13px; height: 26px; background: linear-gradient(90deg, #8a8a8a 0 1px, transparent 1px 3px, #8a8a8a 3px 4px, transparent 4px 6px, #8a8a8a 6px 7px, transparent 7px) 3px 3px / 8px 20px no-repeat #e6e6e6; }

/* status */
.statusbar { height: 24px; flex: none; background: #f9f9f9; display: flex; align-items: center; justify-content: flex-end; gap: 19px; padding-right: 20px; }
.mail-wrap { position: relative; display: block; width: 18px; height: 12px; }
.mail-ico { width: 18px; height: 12px; display: block; }
.mail-dot { position: absolute; right: -4px; bottom: -5px; width: 9px; height: 9px; border-radius: 50%; background: #e8101c; color: #fff; font-size: 7px; line-height: 9px; text-align: center; font-weight: 700; }
.note-ico { width: 16px; height: 18px; }

/* taskbar */
.taskbar { position: relative; height: 50px; flex: none; border-top: 2px solid #fff; background: linear-gradient(90deg, #d6deea 0, #dce5ec 40%, #dfe8ee 60%, #d9e2e9 100%); display: flex; align-items: center; font-family: "Noto Sans", sans-serif; }
.weather { display: flex; align-items: center; gap: 11px; padding-left: 23px; }
.sun { width: 18px; height: 18px; border-radius: 50%; background: linear-gradient(#ffdf50, #ff9f20); }
.weather-text { display: flex; flex-direction: column; line-height: 16px; letter-spacing: .2px; }
.dim { color: #555; }
.task-icons { position: absolute; left: 675px; top: 0; height: 48px; display: flex; }
.task { position: relative; width: 44px; height: 48px; display: flex; align-items: center; justify-content: center; }
.task-ico { width: 24px; height: 24px; display: block; }
.running::after { content: ""; position: absolute; bottom: 2px; left: 19px; width: 6px; height: 3px; border-radius: 2px; background: #777; }
.active::before { content: ""; position: absolute; left: 3px; top: 5px; width: 38px; height: 38px; border-radius: 4px; background: #eef3f7; }
.active .task-ico { position: relative; }
.active::after { content: ""; position: absolute; bottom: 6px; left: 14px; width: 16px; height: 3px; border-radius: 2px; background: #0a78d8; }
.pc-icon { width: 22px; height: 22px; background: #111; border: 2px solid #d8e820; color: #fff; font: 700 9px/14px "Liberation Sans", sans-serif; text-align: center; }
.tray { margin-left: auto; display: flex; align-items: center; height: 100%; padding-right: 20px; font-size: 11.5px; }
.tray-caret { width: 14px; height: 8px; margin-right: 13px; }
.lang { width: 28px; display: flex; flex-direction: column; align-items: center; line-height: 16px; margin-right: 15px; }
.tray-ico { width: 18px; height: 16px; margin-right: 6px; }
.clock { display: flex; flex-direction: column; align-items: flex-end; line-height: 16px; width: 68px; color: #222; white-space: nowrap; }
.notif { width: 16px; height: 16px; margin-left: 8px; border-radius: 50%; background: #0a68c8; color: #fff; text-align: center; line-height: 16px; }
```
